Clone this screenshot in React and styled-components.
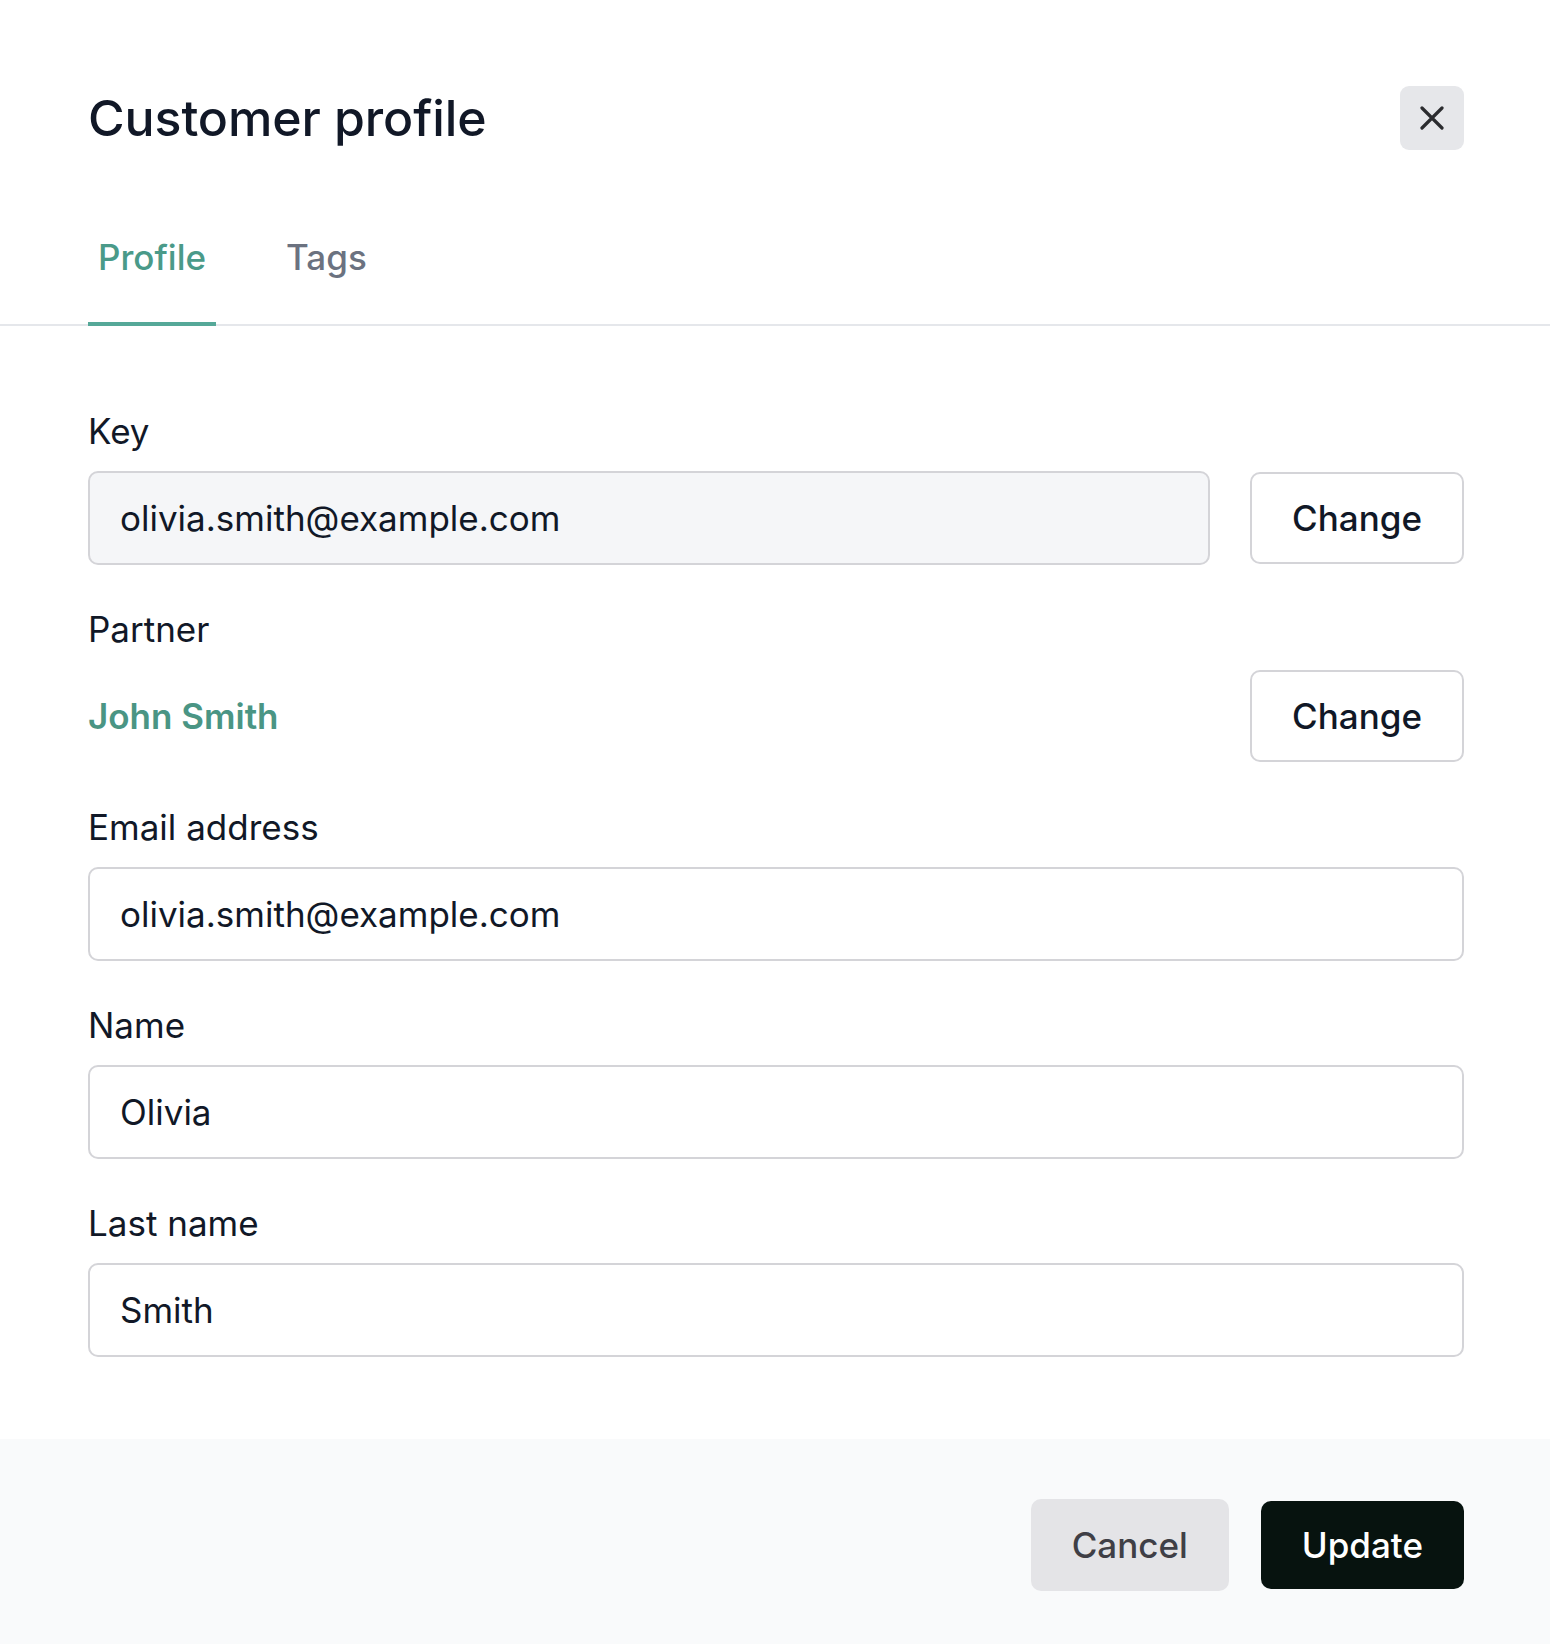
import React from "react";
import styled, { createGlobalStyle } from "styled-components";

const GlobalStyle = createGlobalStyle`
  html, body {
    margin: 0;
    padding: 0;
    background: #ffffff;
  }
  body {
    font-family: Inter, "Noto Sans", "Liberation Sans", sans-serif;
    color: #111827;
  }
  * {
    box-sizing: border-box;
  }
`;

const Modal = styled.div`
  display: flex;
  flex-direction: column;
  min-height: 1644px;
  width: 100%;
  background: #ffffff;
`;

const Header = styled.header`
  display: flex;
  align-items: center;
  justify-content: space-between;
  padding: 86px 86px 0 88px;
`;

const Title = styled.h1`
  margin: 0;
  font-size: 50px;
  line-height: 64px;
  font-weight: 500;
  color: #111827;
  letter-spacing: -0.1px;
`;

const CloseButton = styled.button`
  width: 64px;
  height: 64px;
  border: none;
  border-radius: 9px;
  background: #e6e7ea;
  display: flex;
  align-items: center;
  justify-content: center;
  padding: 0;
  cursor: pointer;
  color: #2b2c2f;
`;

const TabBar = styled.nav`
  display: flex;
  gap: 60px;
  margin-top: 40px;
  padding-left: 88px;
  border-bottom: 2px solid #e5e7eb;
`;

const Tab = styled.button`
  font-family: inherit;
  font-size: 35px;
  line-height: 54px;
  font-weight: 500;
  background: none;
  border: none;
  padding: 40px 10px 38px;
  margin-bottom: -2px;
  border-bottom: 4px solid ${(p) => (p.$active ? "#55a898" : "transparent")};
  color: ${(p) => (p.$active ? "#4a9a89" : "#6b7280")};
  cursor: pointer;
`;

const Body = styled.div`
  display: flex;
  flex-direction: column;
  gap: 37px;
  padding: 78px 86px 82px 88px;
`;

const Field = styled.div`
  display: flex;
  flex-direction: column;
  gap: 13px;
`;

const Label = styled.label`
  font-size: 35px;
  line-height: 54px;
  font-weight: 400;
  color: #111827;
`;

const Row = styled.div`
  display: flex;
  align-items: center;
  gap: 40px;
  min-height: 94px;

  & > input {
    flex: 1;
    min-width: 0;
  }
`;

const Input = styled.input`
  display: block;
  width: 100%;
  height: 94px;
  flex: none;
  padding: 0 30px;
  font-family: inherit;
  font-size: 35px;
  color: #111827;
  border: 2px solid #d4d4d8;
  border-radius: 10px;
  background: ${(p) => (p.readOnly ? "#f5f6f8" : "#ffffff")};
  outline: none;
`;

const PartnerName = styled.span`
  flex: 1;
  font-size: 35px;
  font-weight: 600;
  color: #4a9584;
`;

const OutlineButton = styled.button`
  height: 92px;
  padding: 0 40px;
  font-family: inherit;
  font-size: 35px;
  font-weight: 500;
  color: #111827;
  background: #ffffff;
  border: 2px solid #d4d4d8;
  border-radius: 10px;
  cursor: pointer;
`;

const Footer = styled.footer`
  flex: 1;
  display: flex;
  justify-content: flex-end;
  align-items: flex-start;
  gap: 32px;
  padding: 60px 86px 55px;
  background: #f9fafb;
`;

const ButtonSlot = styled.div`
  height: 92px;
  display: flex;
  align-items: center;
`;

const FooterButton = styled.button`
  height: ${(p) => (p.$primary ? "88px" : "92px")};
  padding: 0 41px;
  font-family: inherit;
  font-size: 35px;
  font-weight: 500;
  border: none;
  border-radius: 10px;
  cursor: pointer;
  background: ${(p) => (p.$primary ? "#07130f" : "#e4e4e7")};
  color: ${(p) => (p.$primary ? "#ffffff" : "#3f3f46")};
`;

function CloseIcon() {
  return (
    <svg width="24" height="24" viewBox="0 0 24 24" fill="none">
      <path d="M2 2L22 22M22 2L2 22" stroke="currentColor" strokeWidth="3.2" strokeLinecap="round" />
    </svg>
  );
}

export default function App() {
  return (
    <>
      <GlobalStyle />
      <Modal>
        <Header>
          <Title>Customer profile</Title>
          <CloseButton aria-label="Close">
            <CloseIcon />
          </CloseButton>
        </Header>

        <TabBar>
          <Tab $active>Profile</Tab>
          <Tab>Tags</Tab>
        </TabBar>

        <Body>
          <Field>
            <Label>Key</Label>
            <Row>
              <Input readOnly value="olivia.smith@example.com" />
              <OutlineButton>Change</OutlineButton>
            </Row>
          </Field>

          <Field>
            <Label>Partner</Label>
            <Row>
              <PartnerName>John Smith</PartnerName>
              <OutlineButton>Change</OutlineButton>
            </Row>
          </Field>

          <Field>
            <Label>Email address</Label>
            <Input defaultValue="olivia.smith@example.com" />
          </Field>

          <Field>
            <Label>Name</Label>
            <Input defaultValue="Olivia" />
          </Field>

          <Field>
            <Label>Last name</Label>
            <Input defaultValue="Smith" />
          </Field>
        </Body>

        <Footer>
          <ButtonSlot>
            <FooterButton>Cancel</FooterButton>
          </ButtonSlot>
          <ButtonSlot>
            <FooterButton $primary>Update</FooterButton>
          </ButtonSlot>
        </Footer>
      </Modal>
    </>
  );
}
